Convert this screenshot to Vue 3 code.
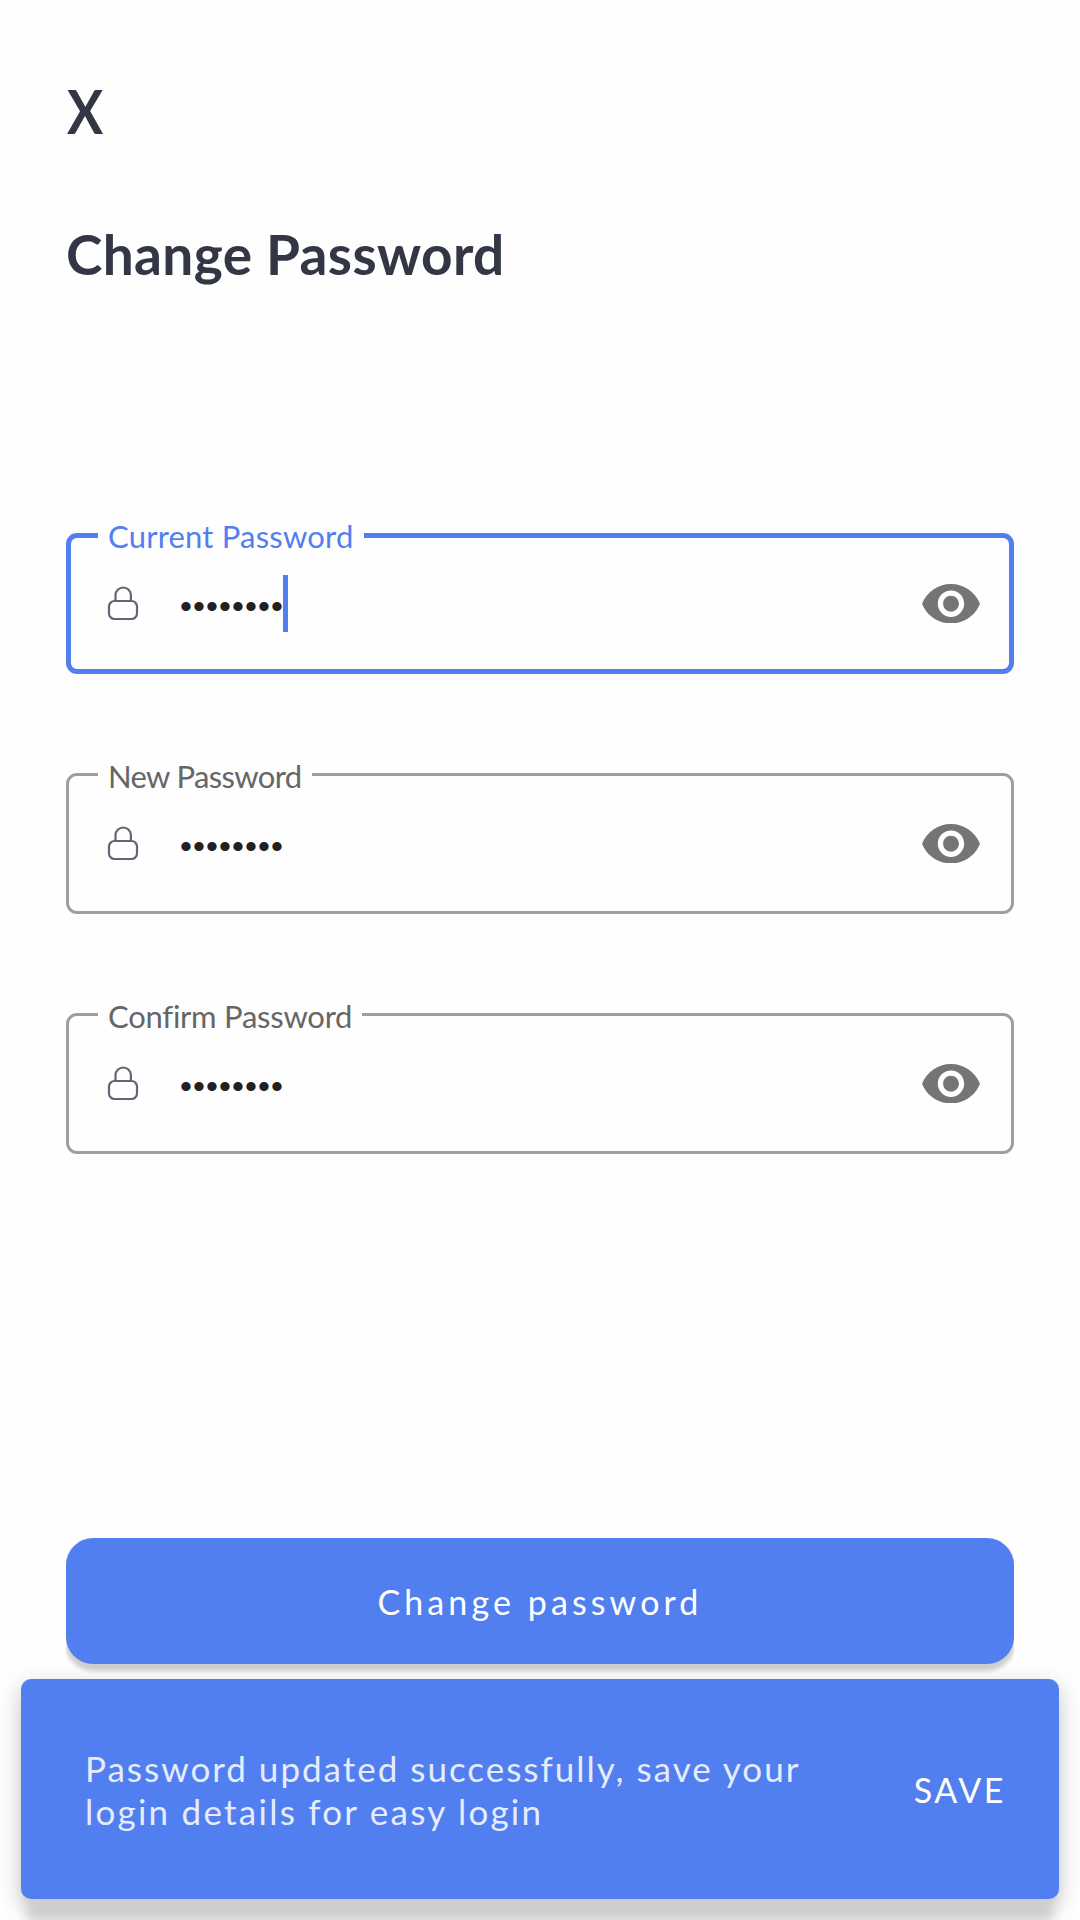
<script setup>
import { ref } from 'vue'

const dots = '••••••••'
const fields = ref([
  { id: 'current', label: 'Current Password', value: dots, active: true },
  { id: 'new', label: 'New Password', value: dots, active: false },
  { id: 'confirm', label: 'Confirm Password', value: dots, active: false },
])
</script>

<template>
  <main class="screen">
    <button class="close" aria-label="Close"><span>X</span></button>
    <h1 class="title">Change Password</h1>

    <form class="fields">
      <div v-for="f in fields" :key="f.id" class="field" :class="[f.id, { active: f.active }]">
        <span class="label">{{ f.label }}</span>
        <svg class="lock" viewBox="0 0 32 36" width="32" height="36">
          <rect x="2" y="16" width="28" height="18" rx="5.500" />
          <path d="M8.500 16V10.200a7.700 7.700 0 0 1 15.400 0V16" />
        </svg>
        <span class="value">{{ f.value }}</span>
        <i v-if="f.active" class="caret"></i>
        <svg class="eye" viewBox="1 4.500 22 15" width="58" height="39.500">
          <path d="M12 4.500C7 4.500 2.730 7.610 1 12c1.730 4.390 6 7.500 11 7.500s9.270-3.110 11-7.500c-1.730-4.390-6-7.500-11-7.500zM12 17c-2.760 0-5-2.240-5-5s2.240-5 5-5 5 2.240 5 5-2.240 5-5 5zm0-8c-1.660 0-3 1.340-3 3s1.340 3 3 3 3-1.340 3-3-1.340-3-3-3z" />
        </svg>
      </div>
    </form>

    <div class="submit-wrap">
      <button class="submit">Change password</button>
    </div>

    <aside class="snackbar">
      <p class="message">Password updated successfully, save your<br><span class="second">login details for easy login</span></p>
      <button class="save">SAVE</button>
    </aside>
  </main>
</template>

<style>
body {
  margin: 0;
  background: #fefefe;
}
</style>

<style scoped>
.screen {
  box-sizing: border-box;
  width: 1080px;
  height: 1920px;
  overflow: hidden;
  display: flex;
  flex-direction: column;
  background: #fefefe;
  font-family: Lato, "Open Sans", sans-serif;
}
button {
  border: 0;
  padding: 0;
  background: none;
  font-family: inherit;
}
.close {
  align-self: flex-start;
  margin: 75px 0 0 67px;
  height: 70px;
  line-height: 70px;
  font-size: 62px;
  font-weight: 700;
  color: #333745;
}
.close span {
  display: inline-block;
  transform: scaleX(0.87);
  transform-origin: left;
}
.title {
  margin: 76px 0 0 66px;
  height: 66px;
  line-height: 66px;
  font-size: 55px;
  font-weight: 700;
  letter-spacing: 0.35px;
  color: #333745;
  white-space: nowrap;
}
.fields {
  display: flex;
  flex-direction: column;
  gap: 99px;
  margin: 246px 66px 0;
}
.field {
  position: relative;
  box-sizing: border-box;
  height: 141px;
  display: flex;
  align-items: center;
  border: 3px solid #9e9e9e;
  border-radius: 11px;
  padding: 0 31px 0 38px;
}
.field.active {
  border: 5px solid #527fef;
  padding: 0 29px 0 36px;
}
.label {
  position: absolute;
  left: 29px;
  top: -18px;
  height: 36px;
  line-height: 36px;
  box-sizing: border-box;
  padding-left: 10px;
  background: #fefefe;
  font-size: 31px;
  color: #666;
  white-space: nowrap;
}
.active .label {
  left: 27px;
  top: -20px;
  color: #527fef;
}
.current .label {
  width: 266px;
  letter-spacing: 0.2px;
}
.new .label {
  width: 214px;
  letter-spacing: -0.65px;
}
.confirm .label {
  width: 264px;
  letter-spacing: -0.25px;
}
.lock {
  margin-top: -2px;
  fill: none;
  stroke: #616575;
  stroke-width: 2.2;
}
.value {
  width: 103px;
  margin: 5px 0 0 41px;
  font-family: "Liberation Sans", sans-serif;
  font-size: 34px;
  line-height: 50px;
  letter-spacing: 1.1px;
  color: #212121;
  white-space: nowrap;
}
.caret {
  width: 5px;
  height: 57px;
  margin-top: -1px;
  background: #527fef;
}
.eye {
  margin-left: auto;
  fill: #757575;
}
.submit-wrap {
  margin: 384px 66px 0;
  height: 141px;
  flex: none;
  overflow: hidden;
}
.submit {
  display: block;
  width: 948px;
  height: 126px;
  border-radius: 27px;
  background: #527fef;
  box-shadow: 0 6px 4px 1px #cecece;
  font-size: 34px;
  line-height: 128px;
  letter-spacing: 4.1px;
  color: #fff;
}
.snackbar {
  flex: none;
  box-sizing: border-box;
  height: 220px;
  margin: 0 21px;
  padding: 0 53px 0 64px;
  display: flex;
  align-items: center;
  justify-content: space-between;
  border-radius: 10px;
  background: #527fef;
  box-shadow: 0 28px 12px -6px #cecece, 0 8px 22px rgba(0, 0, 0, 0.24);
}
.message {
  margin: 2px 0 0;
  font-size: 35px;
  line-height: 43px;
  letter-spacing: 2px;
  color: #e6ecfd;
  white-space: nowrap;
}
.second {
  letter-spacing: 2.25px;
}
.save {
  margin-top: 1px;
  font-size: 34px;
  line-height: 43px;
  letter-spacing: 2.6px;
  color: #fff;
}
</style>
